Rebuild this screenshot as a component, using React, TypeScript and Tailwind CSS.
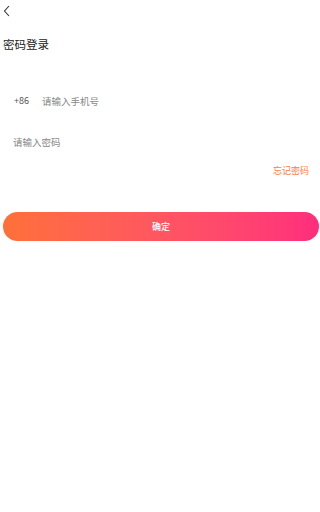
import { useState } from 'react'

export default function App() {
  const [phone, setPhone] = useState('')
  const [password, setPassword] = useState('')

  return (
    <div
      className="w-[320px] h-[512px] bg-white"
      style={{ fontFamily: '"Noto Sans CJK SC", "Noto Sans", sans-serif' }}
    >
      {/* top bar */}
      <div className="h-[22px] flex items-center pl-[3px]">
        <svg width="8" height="12" viewBox="0 0 8 12" fill="none">
          <path d="M6 1 L1.5 6 L6 11" stroke="#333" strokeWidth="1.1" />
        </svg>
      </div>

      <h1 className="mt-[14px] pl-[3px] text-[11.5px] leading-[16px] text-[#222]">密码登录</h1>

      {/* phone */}
      <div className="mt-[39px] flex items-center h-[20px] pl-[14px] pr-[12px]">
        <span className="text-[9px] text-[#555] w-[28px]">+86</span>
        <input
          value={phone}
          onChange={(e) => setPhone(e.target.value)}
          placeholder="请输入手机号"
          className="flex-1 bg-transparent outline-none text-[9.5px] text-[#333] placeholder:text-[#888]"
        />
      </div>

      {/* password */}
      <div className="mt-[21px] flex items-center h-[20px] pl-[13px] pr-[12px]">
        <input
          type="password"
          value={password}
          onChange={(e) => setPassword(e.target.value)}
          placeholder="请输入密码"
          className="flex-1 bg-transparent outline-none text-[9.5px] text-[#333] placeholder:text-[#888]"
        />
      </div>

      <div className="mt-[13px] flex justify-end pr-[11px]">
        <button className="text-[9px] leading-[12px] text-[#ff7a45]">忘记密码</button>
      </div>

      <div className="mt-[34px] px-[3px] pr-[1px]">
        <button className="w-full h-[29px] rounded-full bg-gradient-to-r from-[#ff7038] to-[#ff2d7c] text-white text-[9px] font-medium">
          确定
        </button>
      </div>
    </div>
  )
}
